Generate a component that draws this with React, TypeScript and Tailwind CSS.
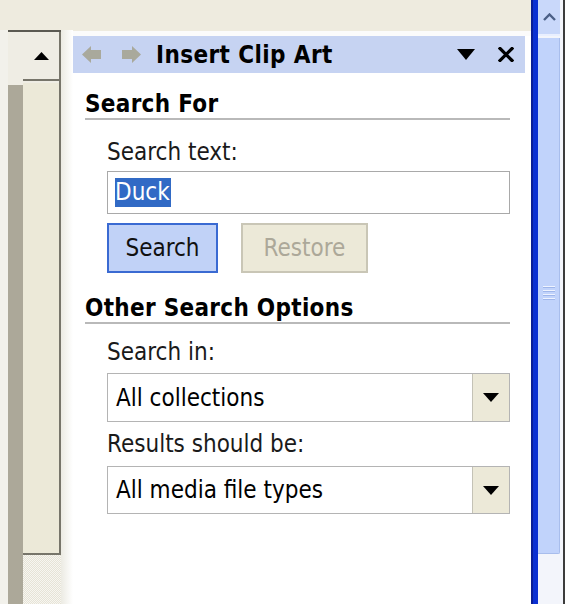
import React from "react";

// Solid triangle pointing down, used by the pane menu and both combo boxes.
function DownTriangle({ w = 16, h = 9 }: { w?: number; h?: number }) {
  return (
    <svg width={w} height={h} viewBox={`0 0 ${w} ${h}`}>
      <polygon points={`0,0 ${w},0 ${w / 2},${h}`} fill="#000" />
    </svg>
  );
}

// Fat navigation arrow (back / forward) in the pane title bar.
function NavArrow({ dir }: { dir: "left" | "right" }) {
  const pts =
    dir === "left"
      ? "0,8.5 9,0 9,4 19,4 19,13 9,13 9,17"
      : "19,8.5 10,0 10,4 0,4 0,13 10,13 10,17";
  return (
    <svg width={19} height={17} viewBox="0 0 19 17">
      <polygon points={pts} fill="#a9a99c" />
    </svg>
  );
}

function CloseGlyph() {
  return (
    <svg width={16} height={15} viewBox="0 0 16 15">
      <path d="M2 1.5 L14 13.5 M14 1.5 L2 13.5" stroke="#000" strokeWidth={3.2} strokeLinecap="square" />
    </svg>
  );
}

// Classic vertical scrollbar belonging to the document on the left.
function LeftRuler() {
  return (
    <div className="w-[73px] flex flex-col">
      <div className="h-[30px] bg-[#eeebdf]" />
      <div className="flex-1 flex">
        <div className="w-[8px] bg-[#f2f1eb]" />
        <div className="w-[53px] flex flex-col border-t-2 border-[#5b5a52]">
          <div className="flex-1 flex">
            <div className="w-[15px] flex flex-col">
              <div className="h-[53px] bg-[#efede4]" />
              <div className="flex-1 bg-[#aca899]" />
            </div>
            <div className="w-[38px] flex flex-col">
              <div className="h-[49px] bg-[#efede4] border-r-2 border-b-2 border-[#77756a] flex items-center justify-center">
                <svg width={15} height={8} viewBox="0 0 15 8">
                  <polygon points="0,8 15,8 7.5,0" fill="#000" />
                </svg>
              </div>
              <div className="h-[2px] bg-[#efede4] border-r-2 border-[#77756a]" />
              <div className="flex-1 bg-[#ece9d8] border-r-2 border-b-2 border-[#77756a]" />
              <div className="h-[49px] bg-[repeating-conic-gradient(#e6e3d6_0_25%,#f7f6f1_0_50%)] bg-[length:2px_2px]" />
            </div>
          </div>
        </div>
        <div className="w-[12px] bg-gradient-to-r from-[#ecebe3] to-[#ffffff]" />
      </div>
    </div>
  );
}

function Heading({ children, className = "" }: { children: React.ReactNode; className?: string }) {
  return (
    <div className={`h-[30px] leading-[28px] font-bold tracking-[0.3px] border-b-2 border-[#b9b9b9] ${className}`}>
      {children}
    </div>
  );
}

function Combo({ value, className = "" }: { value: string; className?: string }) {
  return (
    <div className={`flex border border-[#b4b4b4] bg-white ${className}`}>
      <div className="flex-1 flex items-center pl-[8px]">{value}</div>
      <div className="w-[37px] bg-[#ece9d8] border-l border-[#c4c2b6] flex items-center justify-center">
        <DownTriangle />
      </div>
    </div>
  );
}

// "Insert Clip Art" task pane.
function TaskPane() {
  return (
    <div className="w-[458px] flex flex-col bg-white">
      <div className="h-[31px] bg-[#eeebdf]" />
      <div className="h-[5px] bg-[#fbfbfb]" />
      <div className="h-[37px] mr-[6px] bg-[#c6d3f2] flex items-center pl-[9px] pr-[11px]">
        <NavArrow dir="left" />
        <div className="w-[21px]" />
        <NavArrow dir="right" />
        <div className="ml-[15px] font-bold tracking-[0.4px]">Insert Clip Art</div>
        <div className="ml-auto">
          <DownTriangle w={18} h={11} />
        </div>
        <div className="ml-[23px] flex items-center">
          <CloseGlyph />
        </div>
      </div>
      <div className="flex flex-col pl-[12px] pr-[21px]">
        <Heading className="mt-[17px]">Search For</Heading>
        <div className="pl-[22px] flex flex-col">
          <div className="mt-[18px] leading-[28px] text-[#1a1a1a]">Search text:</div>
          <div className="mt-[5px] h-[43px] border border-[#a9a9a9] flex items-center pl-[7px]">
            <span className="bg-[#316ac5] text-white leading-[29px] pr-[1px]">Duck</span>
          </div>
          <div className="mt-[9px] h-[50px] flex">
            <div className="w-[111px] bg-[#c1d2f7] border-2 border-[#3a6ad2] flex items-center justify-center text-[#111]">
              Search
            </div>
            <div className="ml-[23px] w-[127px] bg-[#ece9d8] border-2 border-[#c9c6b6] flex items-center justify-center text-[#aca899]">
              Restore
            </div>
          </div>
        </div>
        <Heading className="mt-[21px]">Other Search Options</Heading>
        <div className="pl-[22px] flex flex-col">
          <div className="mt-[14px] leading-[28px] text-[#1a1a1a]">Search in:</div>
          <Combo value="All collections" className="mt-[7px] h-[49px]" />
          <div className="mt-[8px] leading-[28px] text-[#1a1a1a]">Results should be:</div>
          <Combo value="All media file types" className="mt-[8px] h-[48px]" />
        </div>
      </div>
    </div>
  );
}

// XP-style blue scrollbar at the window's right edge.
function RightScroll() {
  return (
    <div className="w-[25px] flex flex-col bg-[#f3f5fb]">
      <div className="h-[36px] w-[22px] bg-[#c9d8fa] border-b-2 border-[#e9efff] flex items-center justify-center">
        <svg width={13} height={8} viewBox="0 0 13 8">
          <path d="M1 7 L6.5 1.5 L12 7" stroke="#4b5f86" strokeWidth={2.4} fill="none" />
        </svg>
      </div>
      <div className="h-[2px]" />
      <div className="h-[516px] w-[22px] bg-[#c1d3fb] border-r border-b border-[#a8bdec] rounded-br-[2px] flex flex-col items-center justify-center">
        <div className="flex flex-col gap-[2px] -mt-[6px]">
          <div className="w-[12px] h-[2px] bg-[#eef3ff] border-b border-[#9fb6ea]" />
          <div className="w-[12px] h-[2px] bg-[#eef3ff] border-b border-[#9fb6ea]" />
          <div className="w-[12px] h-[2px] bg-[#eef3ff] border-b border-[#9fb6ea]" />
          <div className="w-[12px] h-[2px] bg-[#eef3ff] border-b border-[#9fb6ea]" />
        </div>
      </div>
      <div className="flex-1" />
    </div>
  );
}

export default function App() {
  return (
    <div className="w-[577px] h-[604px] flex overflow-hidden bg-white text-black text-[24px] font-['DejaVu_Sans_Condensed','DejaVu_Sans',sans-serif] [font-stretch:condensed]">
      <LeftRuler />
      <TaskPane />
      <div className="w-[7px] bg-[#0b30d2] border-l-2 border-[#0a1e96]" />
      <RightScroll />
      <div className="w-[2px] bg-[#3c3c3c]" />
      <div className="flex-1 bg-white" />
    </div>
  );
}
